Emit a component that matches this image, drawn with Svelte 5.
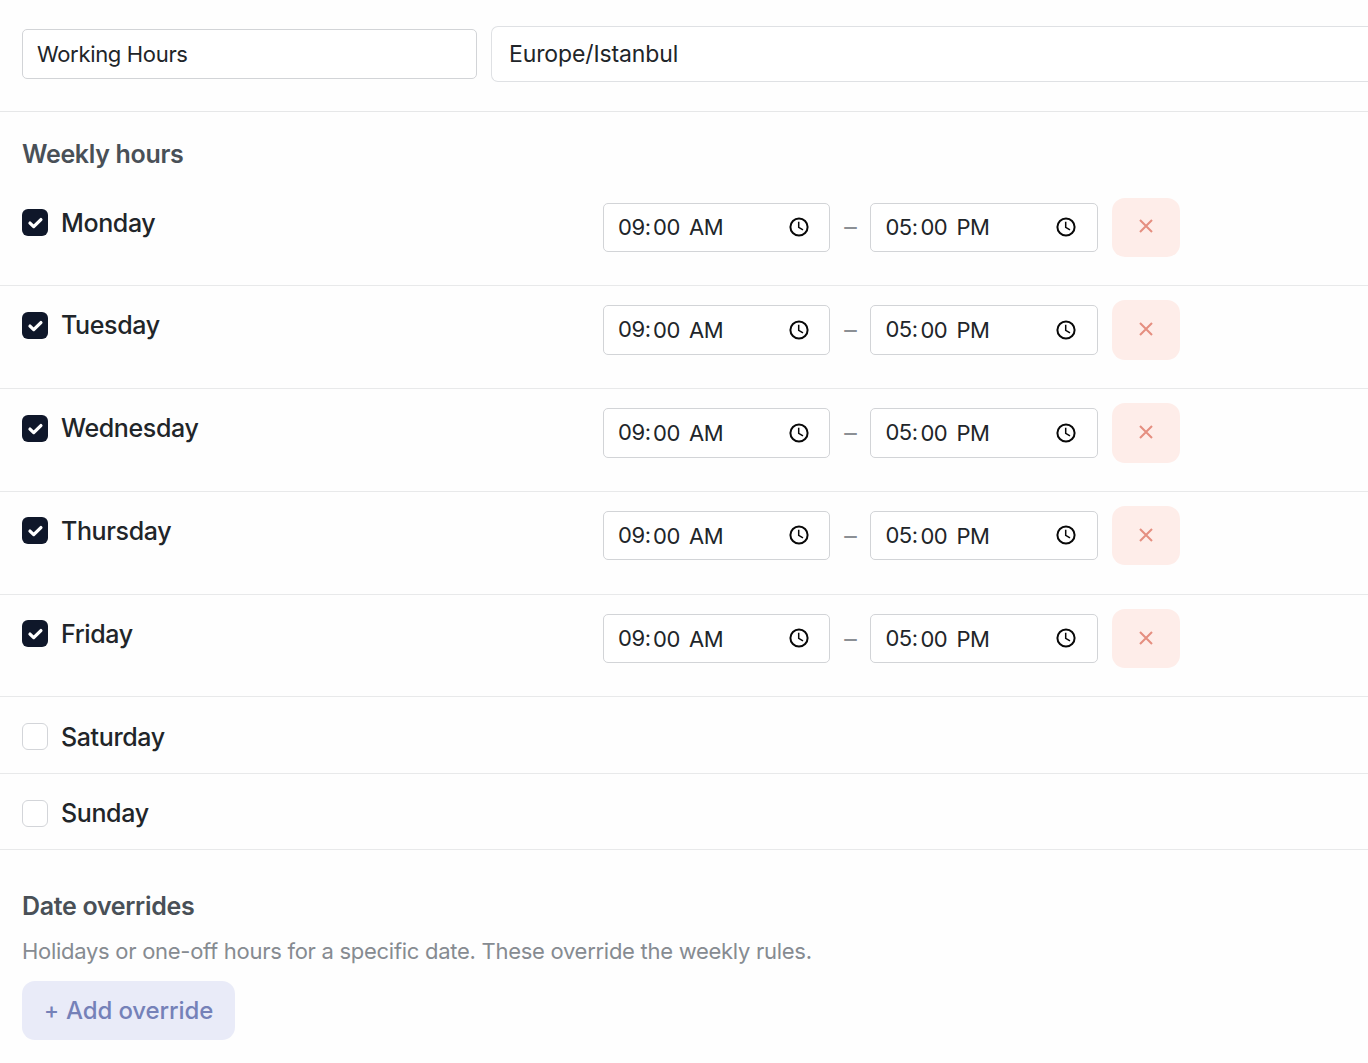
<script>
  const days = [
    { name: 'Monday', on: true },
    { name: 'Tuesday', on: true },
    { name: 'Wednesday', on: true },
    { name: 'Thursday', on: true },
    { name: 'Friday', on: true },
    { name: 'Saturday', on: false },
    { name: 'Sunday', on: false }
  ];
</script>

{#snippet timeField(hour, period)}
  <div class="time">
    <span class="hour">{hour}:</span><span class="minute">00</span><span class="period">{period}</span>
    <svg class="clock" viewBox="0 0 20 20" fill="none" stroke="#080808">
      <circle cx="10" cy="10" r="8.6" stroke-width="2" />
      <path d="M9.7 4.8v5.5l4.3 2.6" stroke-width="1.5" />
    </svg>
  </div>
{/snippet}

<main>
  <header>
    <div class="name">Working Hours</div>
    <div class="zone">Europe/Istanbul</div>
  </header>

  <h2 class="weekly">Weekly hours</h2>

  {#each days as day}
    <section class="day" class:on={day.on}>
      <div class="label">
        <span class="box" class:checked={day.on}>
          {#if day.on}
            <svg viewBox="0 0 26 27" fill="none" stroke="#fff" stroke-width="3.3" stroke-linecap="round" stroke-linejoin="round">
              <path d="M8 14.1l3.7 3.5 7.2-7" />
            </svg>
          {/if}
        </span>
        <span class="dayname">{day.name}</span>
      </div>
      {#if day.on}
        <div class="range">
          {@render timeField('09', 'AM')}
          <span class="dash">–</span>
          {@render timeField('05', 'PM')}
          <button class="remove" aria-label="Remove">
            <svg viewBox="0 0 14 14" fill="none" stroke="#e58f80" stroke-width="2.1">
              <path d="M1 1l12 12M13 1L1 13" />
            </svg>
          </button>
        </div>
      {/if}
    </section>
  {/each}

  <h2 class="overrides">Date overrides</h2>
  <p>Holidays or one-off hours for a specific date. These override the weekly rules.</p>
  <button class="add"><span class="plus">+</span>Add override</button>
</main>

<style>
  :global(body) {
    background: #fefefe;
  }
  main {
    height: 1063px;
    overflow: hidden;
    font-family: Inter, "Liberation Sans", sans-serif;
    color: #212529;
  }
  main, main * {
    box-sizing: border-box;
  }
  header {
    display: flex;
    align-items: center;
    gap: 14px;
    height: 112px;
    padding: 0 0 4px 22px;
    border-bottom: 1px solid #e6e7e8;
  }
  .name {
    width: 455px;
    height: 50px;
    padding-left: 14px;
    border: 1px solid #d2d4d7;
    border-radius: 5px;
    font-size: 22px;
    line-height: 49px;
    letter-spacing: -0.33px;
    background: #fff;
  }
  .zone {
    flex: 1;
    height: 56px;
    padding-left: 17px;
    border: 1px solid #dfe1e4;
    border-right: 0;
    border-radius: 7px 0 0 7px;
    font-size: 23px;
    line-height: 54px;
    letter-spacing: -0.12px;
    background: #fff;
  }
  h2 {
    margin: 0;
    padding-left: 22px;
    font-size: 25px;
    line-height: 30px;
    font-weight: 600;
    letter-spacing: -0.32px;
    color: #495057;
  }
  .weekly {
    height: 71.35px;
    padding-top: 27px;
  }
  .day {
    display: flex;
    align-items: flex-start;
    height: 76.5px;
    padding: 14.25px 0 0 22px;
    border-bottom: 1px solid #e8e9ea;
  }
  .day.on {
    height: 102.8px;
  }
  .label {
    display: flex;
    align-items: center;
    width: 581px;
    height: 50px;
    gap: 13px;
  }
  .box {
    width: 26px;
    height: 27px;
    border: 1px solid #d3d5d9;
    border-radius: 6px;
    background: #fff;
  }
  .box.checked {
    border: 0;
    background: #0f172a;
  }
  .box svg {
    display: block;
    width: 26px;
    height: 27px;
  }
  .dayname {
    font-size: 25px;
    line-height: 30px;
    font-weight: 500;
    letter-spacing: -0.37px;
  }
  .range {
    display: flex;
    align-items: center;
    height: 59.5px;
  }
  .time {
    display: flex;
    align-items: center;
    width: 227.4px;
    height: 49.5px;
    padding: 0 20.8px 0 14px;
    border: 1px solid #d2d4d7;
    border-radius: 5px;
    font-size: 22px;
    letter-spacing: -0.4px;
    background: #fff;
  }
  .hour {
    width: 35px;
    padding-bottom: 1.4px;
  }
  .minute {
    width: 36px;
  }
  .clock {
    width: 20px;
    height: 20px;
    margin: 0 0 0.5px auto;
  }
  .dash {
    width: 40px;
    text-align: center;
    font-size: 25px;
    color: #8b8f94;
  }
  button {
    border: 0;
    font-family: inherit;
  }
  .remove {
    display: flex;
    align-items: center;
    justify-content: center;
    width: 68px;
    height: 59.5px;
    margin-left: 14.2px;
    padding: 0 0 2px;
    border-radius: 13px;
    background: #feede9;
  }
  .remove svg {
    width: 14px;
    height: 14px;
  }
  .overrides {
    margin-top: 40.8px;
  }
  p {
    margin: 15px 0 14.9px 22px;
    font-size: 22px;
    line-height: 30px;
    letter-spacing: -0.28px;
    color: #868b91;
  }
  .add {
    display: flex;
    align-items: center;
    width: 213px;
    height: 59px;
    margin-left: 22px;
    padding: 0 0 0 22px;
    border-radius: 13px;
    background: #e9ebf8;
    color: #7581b8;
    font-size: 24px;
    font-weight: 500;
    letter-spacing: -0.1px;
  }
  .plus {
    margin-right: 7px;
    padding-bottom: 2px;
    font-size: 22.5px;
  }
</style>
